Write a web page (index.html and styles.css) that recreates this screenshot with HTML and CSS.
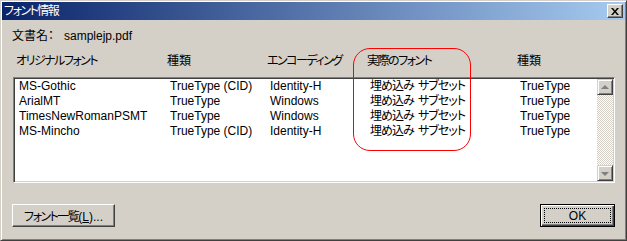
FILE: index.html
```html
<!DOCTYPE html>
<html lang="ja">
<head>
  <meta charset="UTF-8" />
  <title>フォント情報</title>
  <link rel="stylesheet" href="styles.css">
</head>
<body>
  <div class="window">
    <div class="titlebar">
      <span class="title ja">フォント情報</span>
      <button class="close-btn" aria-label="閉じる">
        <svg width="8" height="7" viewBox="0 0 8 7"><path d="M0 0h2l2 2.4 2-2.4h2l-3 3.5 3 3.5h-2l-2-2.4-2 2.4h-2l3-3.5z" fill="#000"/></svg>
      </button>
    </div>

    <div class="content">
      <div class="doc-name">
        <span>文書名：</span><span class="file">samplejp.pdf</span>
      </div>

      <div class="font-table">
        <div class="cols header">
          <span class="ja">オリジナルフォント</span>
          <span>種類</span>
          <span class="ja">エンコーディング</span>
          <span class="ja">実際のフォント</span>
          <span>種類</span>
        </div>

        <div class="listbox">
          <div class="rows">
            <div class="cols row">
              <span>MS-Gothic</span><span>TrueType (CID)</span><span>Identity-H</span><span class="embed">埋め込み サブセット</span><span>TrueType</span>
            </div>
            <div class="cols row">
              <span>ArialMT</span><span>TrueType</span><span>Windows</span><span class="embed">埋め込み サブセット</span><span>TrueType</span>
            </div>
            <div class="cols row">
              <span>TimesNewRomanPSMT</span><span>TrueType</span><span>Windows</span><span class="embed">埋め込み サブセット</span><span>TrueType</span>
            </div>
            <div class="cols row">
              <span>MS-Mincho</span><span>TrueType (CID)</span><span>Identity-H</span><span class="embed">埋め込み サブセット</span><span>TrueType</span>
            </div>
          </div>
          <div class="scrollbar">
            <div class="scroll-btn"><span class="arrow up"></span></div>
            <div class="track"></div>
            <div class="scroll-btn"><span class="arrow down"></span></div>
          </div>
        </div>

        <!-- red annotation around the embedded-font column -->
        <div class="highlight"></div>
      </div>

      <div class="actions">
        <button class="btn list-btn"><span class="ja">フォント一覧</span>(<u>L</u>)...</button>
        <button class="btn default"><span class="focus">OK</span></button>
      </div>
    </div>
  </div>
</body>
</html>
```

FILE: styles.css
```css
* {
  box-sizing: border-box;
}

body {
  margin: 0;
  background-color: #d4d0c8;
  font-family: "Liberation Sans Narrow", "Liberation Sans", "Noto Sans CJK JP", sans-serif;
  font-size: 12px;
  font-feature-settings: "palt";
  color: #000;
}

/* katakana in the old UI font is much narrower than Noto's */
.ja {
  letter-spacing: -1.5px;
}

.embed {
  letter-spacing: -1px;
  word-spacing: 2px;
}

.window {
  width: 627px;
  height: 241px;
  padding: 1px;
  background-color: #d4d0c8;
  border: 1px solid;
  border-color: #d4d0c8 #404040 #404040 #d4d0c8;
  box-shadow: inset 1px 1px #fff, inset -1px -1px #808080;
  display: flex;
  flex-direction: column;
}

.titlebar {
  height: 18px;
  display: flex;
  align-items: center;
  justify-content: space-between;
  padding: 0 2px 0 2px;
  background: linear-gradient(to right, #0a246a, #a6caf0);
}

.title {
  color: #fff;
  line-height: 18px;
}

.close-btn {
  width: 16px;
  height: 14px;
  padding: 0;
  display: flex;
  align-items: center;
  justify-content: center;
  background-color: #d4d0c8;
  border: 1px solid;
  border-color: #fff #404040 #404040 #fff;
  box-shadow: inset -1px -1px #808080;
}

.content {
  flex: 1;
  padding: 0 10px;
  display: flex;
  flex-direction: column;
}

.doc-name {
  margin-top: 9px;
  line-height: 15px;
}

.doc-name .file {
  margin-left: 10px;
}

.font-table {
  position: relative;
  margin-left: 1px;
  margin-top: 10px;
}

.cols {
  display: grid;
  grid-template-columns: 151px 100px 100px 150px 1fr;
  line-height: 15px;
  white-space: nowrap;
}

.header {
  padding-left: 3px;
}

.listbox {
  margin-top: 8px;
  height: 106px;
  padding: 1px;
  display: flex;
  background-color: #fff;
  border: 1px solid;
  border-color: #808080 #fff #fff #808080;
  box-shadow: inset 1px 1px #404040, inset -1px -1px #d4d0c8;
}

.rows {
  flex: 1;
  background-color: #fff;
}

.row {
  padding-left: 4px;
}

.scrollbar {
  width: 16px;
  display: flex;
  flex-direction: column;
}

.track {
  flex: 1;
  background: repeating-conic-gradient(#fff 0 25%, #d4d0c8 0 50%) 0 0 / 2px 2px;
}

.scroll-btn {
  height: 16px;
  display: flex;
  align-items: center;
  justify-content: center;
  background-color: #d4d0c8;
  border: 1px solid;
  border-color: #d4d0c8 #404040 #404040 #d4d0c8;
  box-shadow: inset 1px 1px #fff, inset -1px -1px #808080;
}

.arrow {
  width: 0;
  height: 0;
  border-left: 4px solid transparent;
  border-right: 4px solid transparent;
}

.arrow.up {
  border-bottom: 4px solid #808080;
  margin-top: -1px;
}

.arrow.down {
  border-top: 4px solid #808080;
  margin-top: 1px;
}

.highlight {
  position: absolute;
  left: 340px;
  top: -6px;
  width: 118px;
  height: 103px;
  border: 1px solid #f00;
  border-radius: 17px;
  pointer-events: none;
}

.actions {
  margin-top: 21px;
  display: flex;
  justify-content: space-between;
}

.btn {
  height: 23px;
  padding: 0;
  font: inherit;
  color: #000;
  white-space: nowrap;
  background-color: #d4d0c8;
  border: 1px solid;
  border-color: #fff #404040 #404040 #fff;
  box-shadow: inset -1px -1px #808080;
}

.list-btn {
  width: 103px;
}

.btn.default {
  width: 75px;
  display: flex;
  border-color: #000;
  box-shadow: inset 1px 1px #fff, inset -1px -1px #404040, inset -2px -2px #808080;
}

.focus {
  flex: 1;
  margin: 3px;
  border: 1px dotted #000;
  display: flex;
  align-items: center;
  justify-content: center;
}
```
